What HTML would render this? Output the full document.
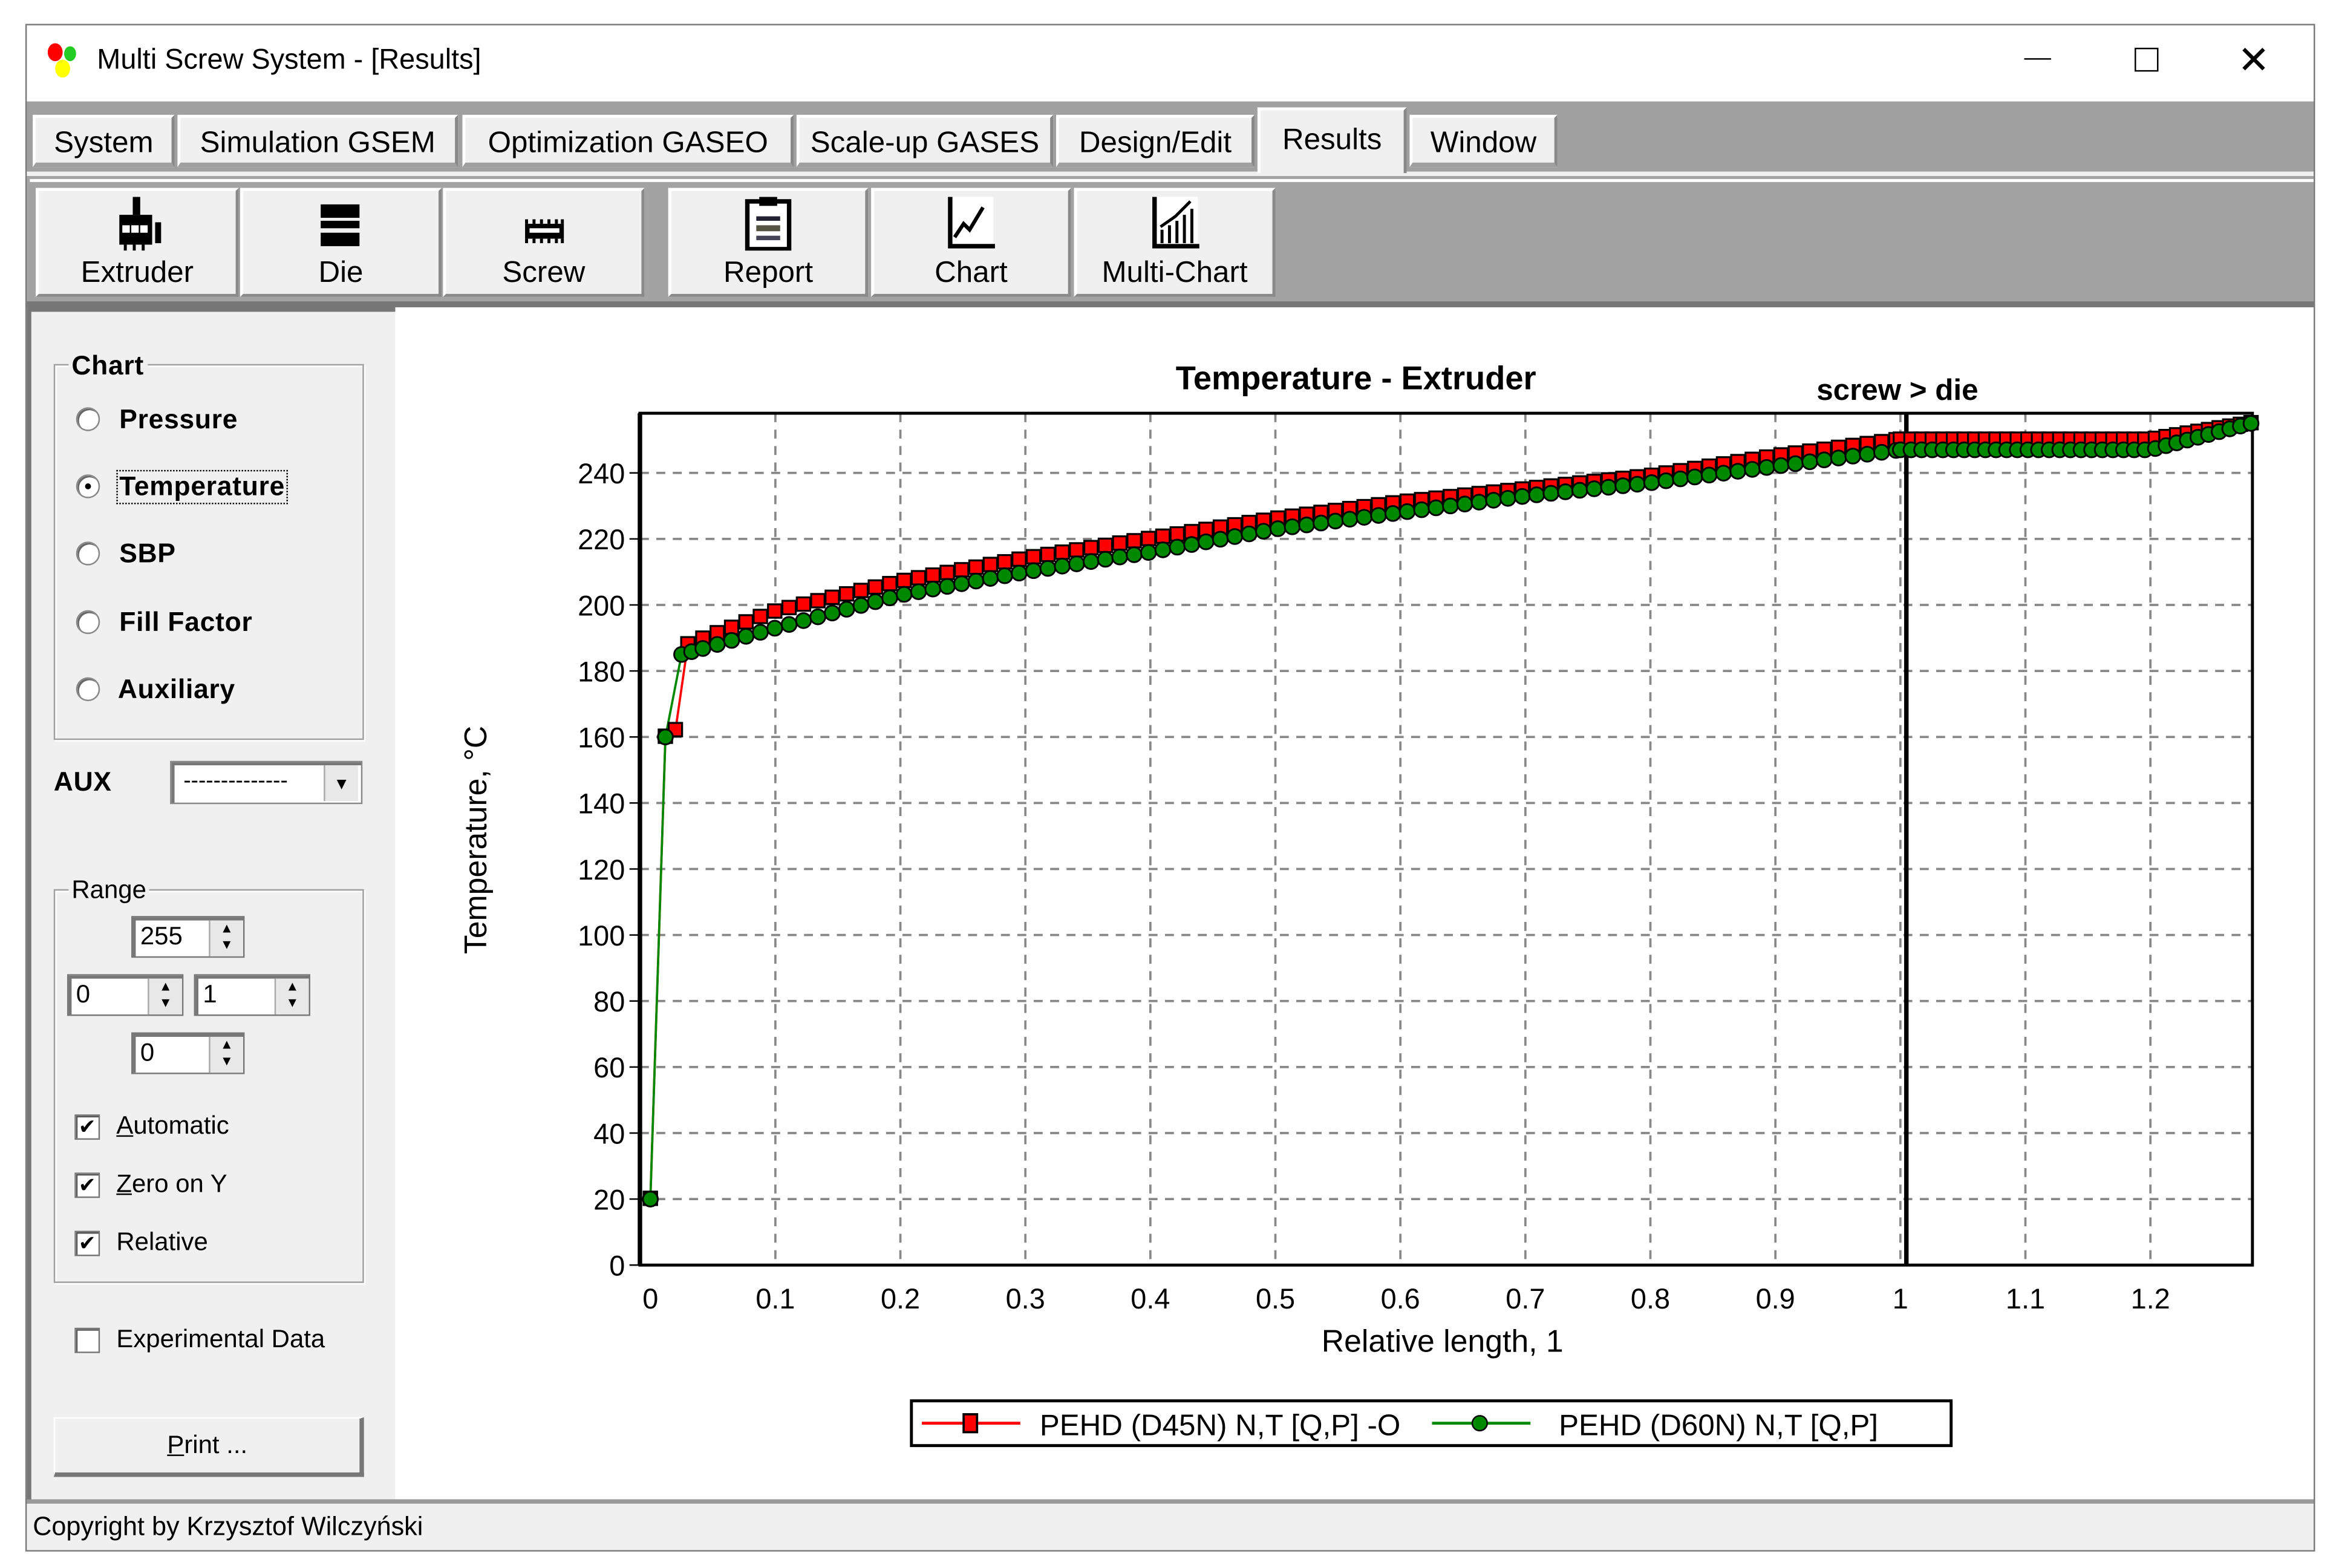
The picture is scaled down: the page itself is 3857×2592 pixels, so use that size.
<!DOCTYPE html>
<html><head><meta charset="utf-8">
<style>
html,body{margin:0;padding:0;background:#fff;overflow:hidden}
body{width:3857px;height:2591px}
#w{position:absolute;left:0;top:0;width:1564px;height:1051px;transform:scale(2.4661);transform-origin:0 0;font-family:"Liberation Sans",sans-serif;background:#fff}
.a{position:absolute}
.tab{position:absolute;top:77px;height:35px;background:#f0f0f0;border-top:2px solid #fff;border-left:2px solid #fff;border-right:2px solid #888;box-sizing:border-box;font-size:20px;line-height:34px;text-align:center;color:#000;border-bottom:3px solid #a0a0a0}
.btn{position:absolute;top:126px;height:73px;background:#f0f0f0;border-top:2px solid #fff;border-left:2px solid #fff;border-right:2px solid #8a8a8a;border-bottom:2px solid #8a8a8a;box-sizing:border-box;font-size:20px;text-align:center}
.btn span{position:absolute;left:0;right:0;top:44px}
.btn svg{position:absolute;left:50%;top:4px;transform:translateX(-50%)}
.grp{position:absolute;border:1px solid #a0a0a0;box-shadow:inset 1px 1px 0 #fff,1px 1px 0 #fff}
.lbl{position:absolute;font-size:18px;font-weight:bold;letter-spacing:0.3px}
.rad{position:absolute;width:14px;height:14px;border-radius:50%;background:#fff;border:1px solid #888;box-shadow:inset 1px 1px 0 #666}
.chk{position:absolute;width:15px;height:15px;background:#fff;border:1px solid #777;box-shadow:inset 1px 1px 0 #555;font-size:14px;line-height:15px;text-align:center}
.sp{position:absolute;height:28px;background:#fff;border:1px solid #777;box-shadow:inset 2px 2px 0 #777;box-sizing:border-box;font-size:17px;line-height:26px;padding-left:5px}
.sp b{position:absolute;right:0;top:2px;width:22px;height:24px;background:#e8e8e8;border-left:1px solid #aaa;font-size:9px;line-height:11px;text-align:center;font-weight:normal}
.norm{position:absolute;font-size:17px}
</style></head><body>
<div id="w">
<div class="a" style="left:17px;top:16px;width:1535px;height:1024px;border:1px solid #777;box-sizing:border-box;background:#f0f0f0"></div>
<div class="a" style="left:18px;top:17px;width:1533px;height:51px;background:#fff"></div>
<svg class="a" style="left:30px;top:27px" width="26" height="28"><ellipse cx="7" cy="8" rx="5" ry="6" fill="#f00"/><ellipse cx="17" cy="9" rx="4" ry="5" fill="#2c2"/><ellipse cx="12" cy="19" rx="5" ry="6" fill="#ff0"/></svg>
<div class="a" style="left:65px;top:30px;font-size:19px">Multi Screw System - [Results]</div>
<div class="a" style="left:1357px;top:39px;width:18px;height:1px;background:#000"></div>
<div class="a" style="left:1431px;top:32px;width:14px;height:14px;border:1px solid #000"></div>
<div class="a" style="left:1500px;top:26px;font-size:26px;line-height:28px">✕</div>
<div class="a" style="left:18px;top:68px;width:1533px;height:50px;background:#a0a0a0"></div>
<div class="a" style="left:18px;top:115px;width:1533px;height:3px;background:#f0f0f0"></div>
<div class="tab" style="left:22px;width:95px">System</div>
<div class="tab" style="left:119px;width:188px">Simulation GSEM</div>
<div class="tab" style="left:310px;width:222px">Optimization GASEO</div>
<div class="tab" style="left:534px;width:172px">Scale-up GASES</div>
<div class="tab" style="left:708px;width:133px">Design/Edit</div>
<div class="tab" style="left:843px;top:72px;height:44px;width:100px;line-height:40px;border-bottom:none">Results</div>
<div class="tab" style="left:945px;width:99px">Window</div>
<div class="a" style="left:18px;top:118px;width:1533px;height:86px;background:#a3a3a3"></div>
<div class="a" style="left:20px;top:120px;width:1531px;height:2px;background:#fff"></div>
<div class="btn" style="left:24px;width:136px"><svg width="40" height="36" viewBox="0 0 40 36"><rect x="17" y="0" width="5" height="12" fill="#000"/><rect x="8" y="12" width="22" height="20" fill="#000"/><rect x="10" y="19" width="5" height="5" fill="#fff"/><rect x="16" y="19" width="5" height="5" fill="#fff"/><rect x="22" y="19" width="5" height="5" fill="#fff"/><rect x="32" y="17" width="4" height="14" fill="#000"/><rect x="11" y="32" width="2" height="4" fill="#000"/><rect x="17" y="32" width="2" height="4" fill="#000"/><rect x="23" y="32" width="2" height="4" fill="#000"/></svg><span>Extruder</span></div>
<div class="btn" style="left:161px;width:135px"><svg width="40" height="36" viewBox="0 0 40 36"><rect x="6" y="5" width="26" height="9" fill="#000"/><rect x="6" y="16" width="26" height="5" fill="#000"/><rect x="6" y="24" width="26" height="9" fill="#000"/></svg><span>Die</span></div>
<div class="btn" style="left:297px;width:135px"><svg width="40" height="36" viewBox="0 0 40 36"><rect x="7" y="18" width="26" height="10" fill="#000"/><rect x="10" y="21" width="20" height="3" fill="#fff"/><path d="M8 18v-3M13 18v-3M18 18v-3M23 18v-3M28 18v-3M32 18v-3M8 28v3M13 28v3M18 28v3M23 28v3M28 28v3M32 28v3" stroke="#000" stroke-width="2"/></svg><span>Screw</span></div>
<div class="btn" style="left:448px;width:134px"><svg width="40" height="36" viewBox="0 0 40 36"><rect x="6" y="3" width="28" height="32" fill="#fff" stroke="#000" stroke-width="3"/><rect x="14" y="0" width="12" height="6" fill="#000"/><rect x="12" y="13" width="16" height="3" fill="#223"/><rect x="12" y="19" width="16" height="4" fill="#554"/><rect x="12" y="26" width="16" height="3" fill="#445"/></svg><span>Report</span></div>
<div class="btn" style="left:584px;width:134px"><svg width="40" height="36" viewBox="0 0 40 36"><rect x="5" y="0" width="30" height="34" fill="#fff"/><path d="M6 0V33H36" fill="none" stroke="#000" stroke-width="3"/><path d="M9 27L15 18L19 22L28 7" fill="none" stroke="#000" stroke-width="2.5"/></svg><span>Chart</span></div>
<div class="btn" style="left:720px;width:135px"><svg width="40" height="36" viewBox="0 0 40 36"><rect x="5" y="0" width="30" height="34" fill="#fff"/><path d="M6 0V33H36" fill="none" stroke="#000" stroke-width="3"/><path d="M11 31V22M16 31V19M21 31V16M26 31V12M31 31V8M10 20L20 13L30 3" fill="none" stroke="#000" stroke-width="2"/></svg><span>Multi-Chart</span></div>
<div class="a" style="left:18px;top:202px;width:1533px;height:4px;background:#777"></div>
<div class="a" style="left:18px;top:206px;width:247px;height:800px;background:#f0f0f0;border-left:3px solid #777;box-sizing:border-box"></div>
<div class="a" style="left:20px;top:206px;width:245px;height:3px;background:#777"></div>
<div class="a" style="left:265px;top:206px;width:1286px;height:800px;background:#fff"></div>
<div class="grp" style="left:36px;top:244px;width:206px;height:250px"></div>
<div class="lbl" style="left:46px;top:235px;background:#f0f0f0;padding:0 2px">Chart</div>
<div class="rad" style="left:51px;top:273px"></div><div class="lbl" style="left:80px;top:271px">Pressure</div>
<div class="rad" style="left:51px;top:318px"><div style="position:absolute;left:5px;top:5px;width:4px;height:4px;background:#000;border-radius:50%"></div></div><div class="lbl" style="left:78px;top:315px;border:1px dotted #000;padding:0 1px">Temperature</div>
<div class="rad" style="left:51px;top:363px"></div><div class="lbl" style="left:80px;top:361px">SBP</div>
<div class="rad" style="left:51px;top:409px"></div><div class="lbl" style="left:80px;top:407px">Fill Factor</div>
<div class="rad" style="left:51px;top:454px"></div><div class="lbl" style="left:79px;top:452px">Auxiliary</div>
<div class="lbl" style="left:36px;top:514px">AUX</div>
<div class="a" style="left:114px;top:510px;width:129px;height:29px;background:#fff;border:1px solid #888;box-shadow:inset 2px 2px 0 #777;box-sizing:border-box;font-size:15px;line-height:26px;padding-left:8px">--------------<div style="position:absolute;right:2px;top:2px;width:22px;height:24px;background:#e8e8e8;border-left:1px solid #aaa;text-align:center;font-size:11px">▼</div></div>
<div class="grp" style="left:36px;top:596px;width:206px;height:262px"></div>
<div class="norm" style="left:46px;top:587px;background:#f0f0f0;padding:0 2px">Range</div>
<div class="sp" style="left:88px;top:614px;width:76px">255<b>▲<br>▼</b></div>
<div class="sp" style="left:45px;top:653px;width:78px">0<b>▲<br>▼</b></div>
<div class="sp" style="left:130px;top:653px;width:78px">1<b>▲<br>▼</b></div>
<div class="sp" style="left:88px;top:692px;width:76px">0<b>▲<br>▼</b></div>
<div class="chk" style="left:50px;top:747px">✔</div><div class="norm" style="left:78px;top:745px"><u>A</u>utomatic</div>
<div class="chk" style="left:50px;top:786px">✔</div><div class="norm" style="left:78px;top:784px"><u>Z</u>ero on Y</div>
<div class="chk" style="left:50px;top:825px">✔</div><div class="norm" style="left:78px;top:823px">Relative</div>
<div class="chk" style="left:50px;top:890px"></div><div class="norm" style="left:78px;top:888px">Experimental Data</div>
<div class="a" style="left:36px;top:950px;width:208px;height:40px;background:#f0f0f0;border-top:1px solid #fff;border-left:1px solid #fff;border-right:3px solid #777;border-bottom:3px solid #777;box-sizing:border-box;font-size:17px;text-align:center;line-height:36px"><u>P</u>rint ...</div>
<div class="a" style="left:18px;top:1005px;width:1533px;height:3px;background:#999"></div>
<div class="a" style="left:18px;top:1008px;width:1533px;height:31px;background:#f0f0f0"></div>
<div class="norm" style="left:22px;top:1013px;font-size:17.5px">Copyright by Krzysztof Wilczyński</div>
<svg class="a" id="ch" style="left:0;top:0" width="1564" height="1051" font-family="Liberation Sans, sans-serif">
<text x="909" y="261" text-anchor="middle" font-size="22" font-weight="bold">Temperature - Extruder</text>
<text x="1272" y="268" text-anchor="middle" font-size="20" font-weight="bold">screw &gt; die</text>
<text transform="translate(326,563) rotate(-90)" text-anchor="middle" font-size="21">Temperature, °C</text>
<text x="967" y="906" text-anchor="middle" font-size="21">Relative length, 1</text>
<g id="grid"></g>
<rect x="429" y="277" width="1081" height="571" fill="none" stroke="#000" stroke-width="2"/>
<line x1="429" y1="277" x2="429" y2="848" stroke="#000" stroke-width="3"/>
<line x1="1278" y1="277" x2="1278" y2="848" stroke="#000" stroke-width="3"/>
<g id="ser"></g>
<rect x="611" y="939" width="697" height="30" fill="#fff" stroke="#000" stroke-width="2"/>
<line x1="618" y1="954" x2="684" y2="954" stroke="#f00" stroke-width="2"/>
<rect x="646" y="948" width="9" height="12" fill="#f00" stroke="#000" stroke-width="1.5"/>
<text x="697" y="962" font-size="20">PEHD (D45N) N,T [Q,P] -O</text>
<line x1="960" y1="954" x2="1026" y2="954" stroke="#080" stroke-width="2"/>
<circle cx="992" cy="954" r="5" fill="#080" stroke="#000"/>
<text x="1045" y="962" font-size="20">PEHD (D60N) N,T [Q,P]</text>
</svg>
</div>
<script>
var X=function(v){return 436+v*838},Y=function(t){return 848-t*2.2125};
var g='';
for(var i=1;i<=12;i++){var x=X(i/10);g+='<line x1="'+x+'" y1="277" x2="'+x+'" y2="848" stroke="#888" stroke-width="1.5" stroke-dasharray="6,5"/>';
var lab=(i==10?'1':(i/10).toString());g+='<text x="'+x+'" y="877" text-anchor="middle" font-size="19">'+lab+'</text>';}
g+='<text x="436" y="877" text-anchor="middle" font-size="19">0</text>';
for(var t=0;t<=240;t+=20){var y=Y(t);if(t>0)g+='<line x1="429" y1="'+y+'" x2="1510" y2="'+y+'" stroke="#888" stroke-width="1.5" stroke-dasharray="6,5"/>';
g+='<line x1="422" y1="'+y+'" x2="429" y2="'+y+'" stroke="#000"/>';
g+='<text x="419" y="'+(y+7)+'" text-anchor="end" font-size="19">'+t+'</text>';}
document.getElementById('grid').innerHTML=g;
function interp(pts,v){for(var k=1;k<pts.length;k++){if(v<=pts[k][0]){var a=pts[k-1],b=pts[k];return a[1]+(b[1]-a[1])*(v-a[0])/(b[0]-a[0]);}}return pts[pts.length-1][1];}
var R=[[0,20],[0.005,50],[0.012,160],[0.02,162],[0.03,188],[0.1,198],[0.2,207],[0.3,214],[0.4,220],[0.5,226],[0.6,231],[0.7,235],[0.8,239],[0.9,245],[1.0,250],[1.2,250],[1.28,255]];
var G=[[0,20],[0.012,160],[0.025,185],[0.1,193],[0.2,203],[0.3,210],[0.4,216],[0.5,223],[0.6,228],[0.7,233],[0.8,237],[0.9,242],[1.0,247],[1.2,247],[1.28,255]];
function xs(first){var a=first.slice();for(var v=0.042;v<1.0;v+=0.0115)a.push(v);for(var v=1.0;v<=1.281;v+=0.0085)a.push(v);return a;}
var ar=xs([0,0.012,0.02,0.03]),ag=xs([0,0.012,0.025,0.033]);
var s='',pr='',pg='';
ar.forEach(function(v){pr+=X(v).toFixed(1)+','+Y(interp(R,v)).toFixed(1)+' ';});
ag.forEach(function(v){pg+=X(v).toFixed(1)+','+Y(interp(G,v)).toFixed(1)+' ';});
s+='<polyline points="'+pr+'" fill="none" stroke="#f00" stroke-width="1.5"/>';
s+='<polyline points="'+pg+'" fill="none" stroke="#080" stroke-width="1.5"/>';
ar.forEach(function(v){var x=X(v),y=Y(interp(R,v));s+='<rect x="'+(x-4.5)+'" y="'+(y-5)+'" width="9" height="9" fill="#f00" stroke="#000" stroke-width="1.3"/>';});
ag.forEach(function(v){var x=X(v),y=Y(interp(G,v));s+='<circle cx="'+x+'" cy="'+y+'" r="5" fill="#080" stroke="#000" stroke-width="1.2"/>';});
document.getElementById('ser').innerHTML=s;
</script>
</body></html>
